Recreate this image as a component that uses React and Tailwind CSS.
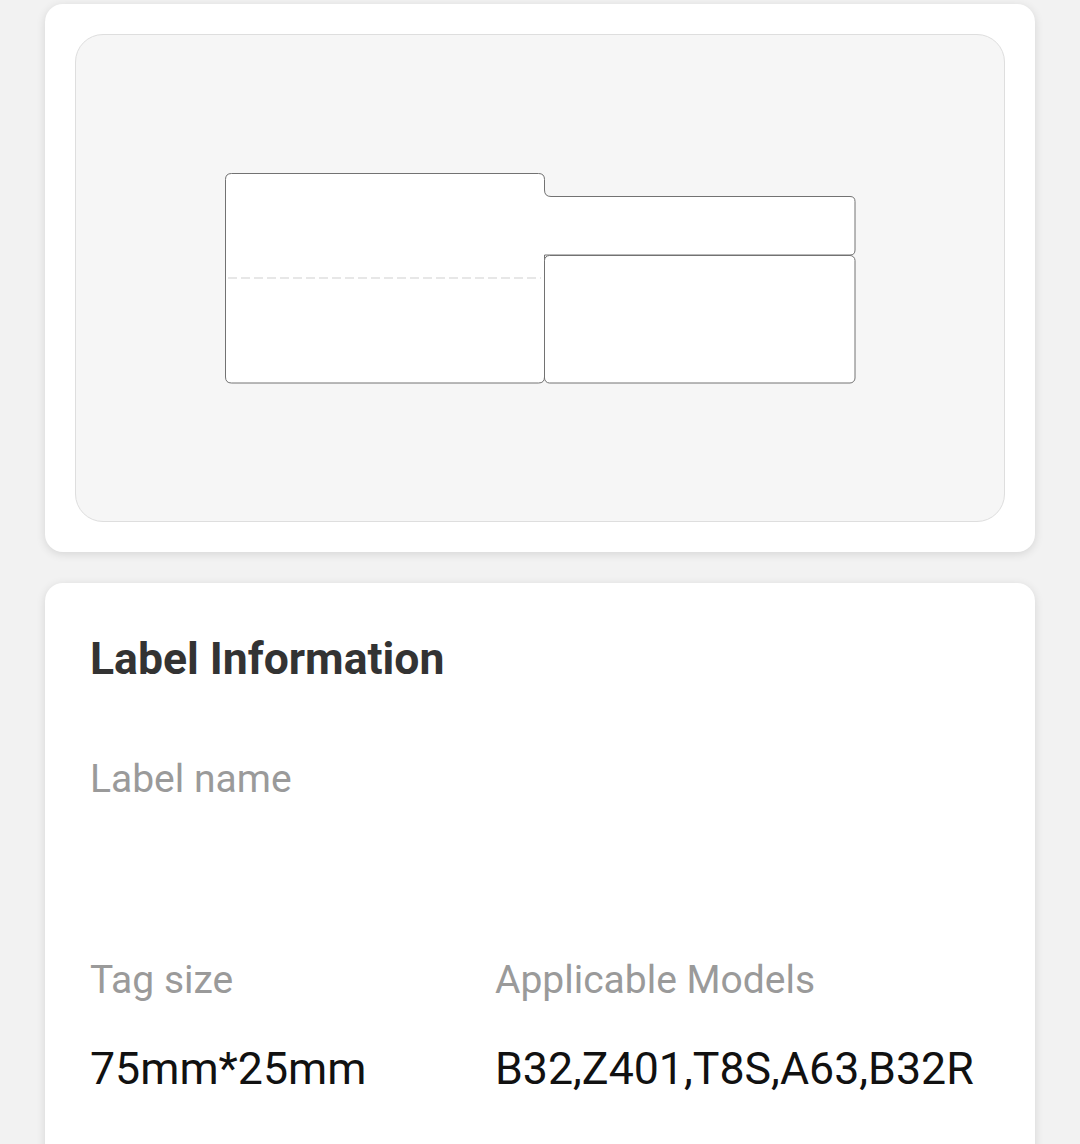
import React from 'react';

const LabelPreview = () => (
    <svg width="633" height="213" viewBox="0 0 633 213" fill="none" xmlns="http://www.w3.org/2000/svg">
        <path
            d="M7.5 1.5H314.5Q320.5 1.5 320.5 7.5V18Q320.5 24.5 327 24.5H626Q631 24.5 631 29.5V78Q631 83 626 83H320.5V205Q320.5 211 314.5 211H7.5Q1.5 211 1.5 205V7.5Q1.5 1.5 7.5 1.5Z"
            fill="#ffffff"
            stroke="#727272"
            strokeWidth="1"
        />
        <rect x="320.5" y="83.5" width="310.5" height="127.5" rx="5" fill="#ffffff" stroke="#727272" strokeWidth="1" />
        <line x1="4" y1="106" x2="317" y2="106" stroke="#cfcfcf" strokeWidth="1" strokeDasharray="9 4" />
    </svg>
);

const Field = ({ label, value, className = '' }) => (
    <div className={className}>
        <div className="text-[39px] leading-[46px] text-[#9a9a9a]">{label}</div>
        <div className="mt-[40px] h-[52px] text-[44.7px] leading-[52px] text-[#111111] whitespace-nowrap">{value}</div>
    </div>
);

export default function App() {
    return (
        <div className="min-h-[1144px] bg-[#f2f2f2] px-[45px] pt-[4px] font-['Roboto',sans-serif] overflow-hidden">
            {/* preview card */}
            <div className="rounded-[18px] bg-white p-[30px] shadow-[0_2px_10px_rgba(0,0,0,0.12)]">
                <div className="flex h-[488px] items-center justify-center rounded-[28px] border border-[#dedede] bg-[#f6f6f6]">
                    <LabelPreview />
                </div>
            </div>

            {/* info card */}
            <div className="mt-[31px] h-[600px] rounded-[18px] bg-white pl-[45px] pr-[46px] pt-[50px] shadow-[0_2px_10px_rgba(0,0,0,0.12)]">
                <h2 className="text-[44.5px] leading-[53px] font-bold text-[#333333]">Label Information</h2>
                <Field className="mt-[70px]" label="Label name" value="" />
                <div className="mt-[63px] flex">
                    <Field className="w-[405px]" label="Tag size" value="75mm*25mm" />
                    <Field label="Applicable Models" value="B32,Z401,T8S,A63,B32R" />
                </div>
            </div>
        </div>
    );
}
